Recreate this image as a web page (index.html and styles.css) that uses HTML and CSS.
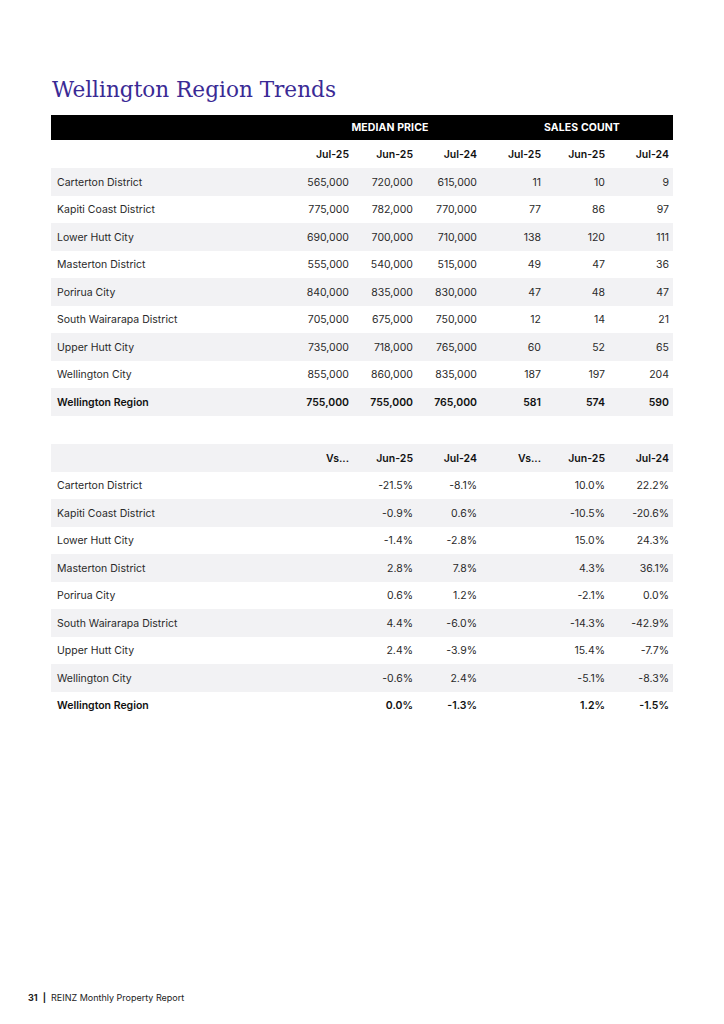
FILE: index.html
```html
<!DOCTYPE html>
<html lang="en">
<head>
<meta charset="utf-8">
<title>Wellington Region Trends</title>
<link rel="stylesheet" href="styles.css">
</head>
<body>
<div class="page">
  <h1 class="title">Wellington Region Trends</h1>

  <table class="data">
    <colgroup><col class="c-name"><col><col><col><col><col><col></colgroup>
    <thead>
      <tr class="group">
        <th></th>
        <th colspan="3" class="grp">MEDIAN PRICE</th>
        <th colspan="3" class="grp">SALES COUNT</th>
      </tr>
      <tr class="cols">
        <th></th><th>Jul-25</th><th>Jun-25</th><th>Jul-24</th><th>Jul-25</th><th>Jun-25</th><th>Jul-24</th>
      </tr>
    </thead>
    <tbody class="striped-odd">
      <tr><td>Carterton District</td><td>565,000</td><td>720,000</td><td>615,000</td><td>11</td><td>10</td><td>9</td></tr>
      <tr><td>Kapiti Coast District</td><td>775,000</td><td>782,000</td><td>770,000</td><td>77</td><td>86</td><td>97</td></tr>
      <tr><td>Lower Hutt City</td><td>690,000</td><td>700,000</td><td>710,000</td><td>138</td><td>120</td><td>111</td></tr>
      <tr><td>Masterton District</td><td>555,000</td><td>540,000</td><td>515,000</td><td>49</td><td>47</td><td>36</td></tr>
      <tr><td>Porirua City</td><td>840,000</td><td>835,000</td><td>830,000</td><td>47</td><td>48</td><td>47</td></tr>
      <tr><td>South Wairarapa District</td><td>705,000</td><td>675,000</td><td>750,000</td><td>12</td><td>14</td><td>21</td></tr>
      <tr><td>Upper Hutt City</td><td>735,000</td><td>718,000</td><td>765,000</td><td>60</td><td>52</td><td>65</td></tr>
      <tr><td>Wellington City</td><td>855,000</td><td>860,000</td><td>835,000</td><td>187</td><td>197</td><td>204</td></tr>
      <tr class="total"><td>Wellington Region</td><td>755,000</td><td>755,000</td><td>765,000</td><td>581</td><td>574</td><td>590</td></tr>
    </tbody>
  </table>

  <table class="data second">
    <colgroup><col class="c-name"><col><col><col><col><col><col></colgroup>
    <thead>
      <tr class="cols shaded">
        <th></th><th>Vs...</th><th>Jun-25</th><th>Jul-24</th><th>Vs...</th><th>Jun-25</th><th>Jul-24</th>
      </tr>
    </thead>
    <tbody class="striped-even">
      <tr><td>Carterton District</td><td></td><td>-21.5%</td><td>-8.1%</td><td></td><td>10.0%</td><td>22.2%</td></tr>
      <tr><td>Kapiti Coast District</td><td></td><td>-0.9%</td><td>0.6%</td><td></td><td>-10.5%</td><td>-20.6%</td></tr>
      <tr><td>Lower Hutt City</td><td></td><td>-1.4%</td><td>-2.8%</td><td></td><td>15.0%</td><td>24.3%</td></tr>
      <tr><td>Masterton District</td><td></td><td>2.8%</td><td>7.8%</td><td></td><td>4.3%</td><td>36.1%</td></tr>
      <tr><td>Porirua City</td><td></td><td>0.6%</td><td>1.2%</td><td></td><td>-2.1%</td><td>0.0%</td></tr>
      <tr><td>South Wairarapa District</td><td></td><td>4.4%</td><td>-6.0%</td><td></td><td>-14.3%</td><td>-42.9%</td></tr>
      <tr><td>Upper Hutt City</td><td></td><td>2.4%</td><td>-3.9%</td><td></td><td>15.4%</td><td>-7.7%</td></tr>
      <tr><td>Wellington City</td><td></td><td>-0.6%</td><td>2.4%</td><td></td><td>-5.1%</td><td>-8.3%</td></tr>
      <tr class="total"><td>Wellington Region</td><td></td><td>0.0%</td><td>-1.3%</td><td></td><td>1.2%</td><td>-1.5%</td></tr>
    </tbody>
  </table>

  <footer class="footer"><span class="pnum">31</span><span class="sep">|</span>REINZ Monthly Property Report</footer>
</div>
</body>
</html>
```

FILE: styles.css
```css
html, body {
  margin: 0;
  padding: 0;
  background: #ffffff;
}

.page {
  position: relative;
  width: 724px;
  height: 1024px;
  box-sizing: border-box;
  padding: 74px 0 0 51px;
  font-family: "Inter", "Liberation Sans", sans-serif;
  color: #1a1a1a;
}

.title {
  margin: 0 0 9px 1px;
  font-family: "DejaVu Serif", "Liberation Serif", serif;
  font-weight: normal;
  font-size: 21.6px;
  line-height: 32px;
  color: #3a2a95;
  letter-spacing: 0;
}

.data {
  width: 622px;
  border-collapse: collapse;
  table-layout: fixed;
  font-size: 10.5px;
}

.data col { width: 64px; }
.data col.c-name { width: 238px; }

.data th,
.data td {
  padding: 1px 4px 0 6px;
  text-align: right;
  white-space: nowrap;
  overflow: hidden;
}

.data th:first-child,
.data td:first-child {
  text-align: left;
}

.data td { font-weight: 400; color: #2a2a2a; }

.group {
  background: #000;
  height: 25px;
}

.group .grp {
  color: #fff;
  font-weight: 700;
  font-size: 10.5px;
  text-align: center;
  padding-left: 14px;
  padding-top: 0;
  letter-spacing: 0.1px;
}

.cols {
  height: 28px;
}

.cols th {
  font-weight: 600;
  color: #111;
}

.shaded { background: #f2f2f4; }

.data tbody tr { height: 27.5px; }

.striped-odd tr:nth-child(odd) { background: #f2f2f4; }
.striped-even tr:nth-child(even) { background: #f2f2f4; }

.data tr.total td {
  font-weight: 600;
  color: #111;
}

.second {
  margin-top: 28px;
}

.footer {
  position: absolute;
  left: 28px;
  top: 992px;
  font-size: 9px;
  color: #222;
}

.pnum { font-weight: 700; }
.sep { font-weight: 700; margin: 0 5px 0 5px; }
```
